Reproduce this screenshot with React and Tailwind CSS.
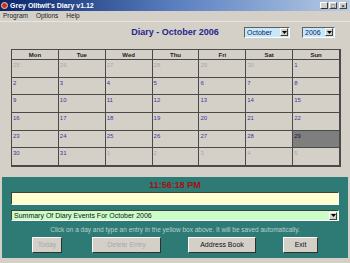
import React from "react";

const weeks = [
  [[26, 0], [27, 0], [27, 0], [28, 0], [29, 0], [30, 0], [1, 1]],
  [[2, 1], [3, 1], [4, 1], [5, 1], [6, 1], [7, 1], [8, 1]],
  [[9, 1], [10, 1], [11, 1], [12, 1], [13, 1], [14, 1], [15, 1]],
  [[16, 1], [17, 1], [18, 1], [19, 1], [20, 1], [21, 1], [22, 1]],
  [[23, 1], [24, 1], [25, 1], [26, 1], [27, 1], [28, 1], [29, 2]],
  [[30, 1], [31, 1], [1, 0], [2, 0], [3, 0], [4, 0], [5, 0]],
];
weeks[0][1] = [26, 0];
weeks[0][0] = [25, 0];

const days = ["Mon", "Tue", "Wed", "Thu", "Fri", "Sat", "Sun"];

function Arrow() {
  return (
    <div className="w-[8px] h-[8px] bg-[#d4d0c8] border border-t-white border-l-white border-b-[#404040] border-r-[#404040] flex items-center justify-center">
      <svg width="5" height="3" viewBox="0 0 5 3">
        <path d="M0 0h5L2.5 3z" fill="#000" />
      </svg>
    </div>
  );
}

function Btn({ label, w, disabled, className = "" }) {
  return (
    <div
      className={`h-[16px] bg-[#d4d0c8] border border-t-white border-l-white border-b-[#303030] border-r-[#303030] flex items-center justify-center text-[7px] ${
        disabled ? "text-[#a8a8a8]" : "text-[#101010]"
      } ${w} ${className}`}
    >
      {label}
    </div>
  );
}

export default function App() {
  return (
    <div
      className="w-[350px] h-[263px] bg-[#d4d0c8] flex flex-col overflow-hidden"
      style={{ fontFamily: '"Liberation Sans", Arial, sans-serif' }}
    >
      {/* title bar */}
      <div className="h-[11px] bg-gradient-to-r from-[#0a246a] via-[#5a7fc0] to-[#b8cce4] flex items-center pl-[1px] pr-[3px]">
        <div className="w-[7px] h-[7px] rounded-full bg-[#c83030] border border-[#f0d0a0]" />
        <span className="ml-[2px] text-[7px] font-bold text-white leading-none">
          Grey Olltwit's Diary v1.12
        </span>
        <div className="ml-auto flex gap-[1px]">
          {["_", "□", "×"].map((c, i) => (
            <div
              key={i}
              className={`w-[8px] h-[7px] bg-[#d4d0c8] border border-t-white border-l-white border-b-[#404040] border-r-[#404040] flex items-center justify-center text-[6px] leading-none text-black ${
                i === 2 ? "ml-[1px]" : ""
              }`}
            >
              {c}
            </div>
          ))}
        </div>
      </div>

      {/* menu */}
      <div className="h-[11px] flex items-center text-[6.5px] text-[#202020] pl-[3px] gap-[8px] border-b border-[#e8e6e0]">
        <span>Program</span>
        <span>Options</span>
        <span>Help</span>
      </div>

      {/* header */}
      <div className="flex items-center h-[12px] mt-[4px]">
        <div className="w-[244px] pl-[106px] text-center text-[9px] font-bold text-[#26268c] leading-none">
          Diary - October 2006
        </div>
        <div className="w-[46px] h-[11px] bg-[#c6e8fb] border border-t-[#606060] border-l-[#606060] border-b-white border-r-white flex items-center pl-[2px] pr-[1px] text-[7px] text-[#102060]">
          <span className="flex-1 leading-none">October</span>
          <Arrow />
        </div>
        <div className="ml-[12px] w-[33px] h-[11px] bg-[#c6e8fb] border border-t-[#606060] border-l-[#606060] border-b-white border-r-white flex items-center pl-[2px] pr-[1px] text-[7px] text-[#102060]">
          <span className="flex-1 leading-none">2006</span>
          <Arrow />
        </div>
      </div>

      {/* calendar */}
      <div className="ml-[11px] mt-[11px] w-[330px] h-[118px] grid grid-cols-7 grid-rows-[9px_repeat(6,1fr)] gap-px bg-[#4a4a4a] border border-[#4a4a4a] border-r-2 border-b-2">
        {days.map((d) => (
          <div
            key={d}
            className="bg-[#d4d0c8] text-[6px] font-bold text-[#202020] flex items-center justify-center leading-none"
          >
            {d}
          </div>
        ))}
        {weeks.flat().map(([n, t], i) => (
          <div
            key={i}
            className={`${
              t === 2 ? "bg-[#7e7e7e] text-[#1a1a3a]" : "bg-[#d4d0c8]"
            } ${t === 0 ? "text-[#a8a8a8]" : t === 1 ? "text-[#3a3a9c]" : ""} text-[6px] leading-none pl-[1px] pt-[2px]`}
          >
            {n}
          </div>
        ))}
      </div>

      {/* teal panel */}
      <div className="mx-[2px] mt-[10px] h-[81px] bg-[#2e7a75] flex flex-col">
        <div className="mt-[2px] h-[12px] leading-[12px] text-center text-[9px] font-bold text-[#9c1414]">
          11:56:18 PM
        </div>
        <div className="mt-[1px] mx-[9px] h-[13px] bg-[#ffffcf] border border-t-[#404040] border-l-[#404040] border-b-white border-r-white" />
        <div className="mt-[5px] mx-[9px] h-[11px] bg-[#ccfcc8] border border-t-[#404040] border-l-[#404040] border-b-white border-r-white flex items-center pl-[2px] pr-[1px]">
          <span className="flex-1 text-[7px] leading-none text-[#102010]">
            Summary Of Diary Events For October 2006
          </span>
          <Arrow />
        </div>
        <div className="mt-[4px] h-[10px] leading-[10px] text-center text-[6.5px] text-[#b6d2ce]">
          Click on a day and type an entry in the yellow box above. It will be saved automatically.
        </div>
        <div className="mt-[2px] flex">
          <Btn label="Today" w="w-[30px]" disabled className="ml-[30px]" />
          <Btn label="Delete Entry" w="w-[69px]" disabled className="ml-[30px]" />
          <Btn label="Address Book" w="w-[68px]" className="ml-[27px]" />
          <Btn label="Exit" w="w-[35px]" className="ml-[27px]" />
        </div>
      </div>
    </div>
  );
}
